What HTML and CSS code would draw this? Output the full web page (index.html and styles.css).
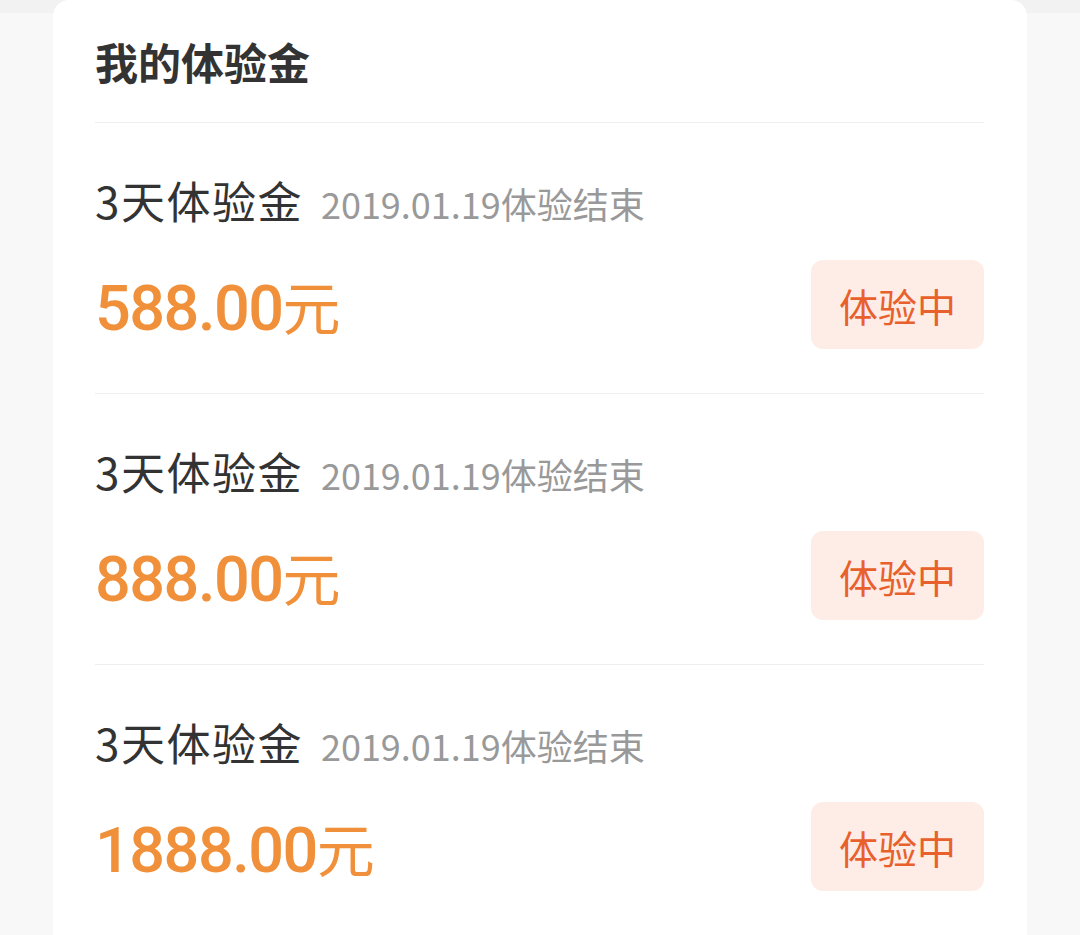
FILE: index.html
```html
<!DOCTYPE html>
<html lang="zh-CN">
<head>
    <meta charset="UTF-8">
    <meta name="viewport" content="width=device-width, initial-scale=1.0">
    <title>我的体验金</title>
    <link rel="stylesheet" href="styles.css">
</head>
<body>
    <div class="card">
        <div class="card-title">我的体验金</div>

        <div class="trial-item">
            <div class="trial-head">
                <span class="trial-name">3天体验金</span>
                <span class="trial-date">2019.01.19体验结束</span>
            </div>
            <div class="trial-body">
                <span class="trial-amount">588.00<span class="unit">元</span></span>
                <span class="trial-status">体验中</span>
            </div>
        </div>

        <div class="trial-item">
            <div class="trial-head">
                <span class="trial-name">3天体验金</span>
                <span class="trial-date">2019.01.19体验结束</span>
            </div>
            <div class="trial-body">
                <span class="trial-amount">888.00<span class="unit">元</span></span>
                <span class="trial-status">体验中</span>
            </div>
        </div>

        <div class="trial-item">
            <div class="trial-head">
                <span class="trial-name">3天体验金</span>
                <span class="trial-date">2019.01.19体验结束</span>
            </div>
            <div class="trial-body">
                <span class="trial-amount">1888.00<span class="unit">元</span></span>
                <span class="trial-status">体验中</span>
            </div>
        </div>
    </div>
</body>
</html>
```

FILE: styles.css
```css
body {
    margin: 0;
    padding: 0 53px;
    font-family: "Noto Sans CJK SC", "Noto Sans", sans-serif;
    background: linear-gradient(#f2f2f2 0, #f2f2f2 13px, #f8f8f8 13px) no-repeat, #f8f8f8;
    height: 935px;
    overflow: hidden;
}

.card {
    background-color: #fff;
    border-radius: 16px 16px 0 0;
    padding: 0 43px 0 42px;
    min-height: 1000px;
}

.card-title {
    height: 122px;
    display: flex;
    align-items: center;
    font-size: 43px;
    font-weight: bold;
    color: #333;
    border-bottom: 1px solid #eeeeee;
}

.trial-item {
    padding: 52px 0 44px;
    border-bottom: 1px solid #eeeeee;
}

.trial-head {
    display: flex;
    align-items: baseline;
    line-height: 50px;
}

.trial-name {
    font-size: 44px;
    letter-spacing: 1.5px;
    color: #333;
}

.trial-date {
    font-size: 36px;
    color: #999;
    margin-left: 18px;
}

.trial-body {
    display: flex;
    align-items: center;
    justify-content: space-between;
    margin-top: 32px;
}

.trial-amount {
    font-family: Roboto, "Noto Sans CJK SC", sans-serif;
    font-size: 63px;
    font-weight: 500;
    line-height: 63px;
    letter-spacing: -1.5px;
    color: #f0903a;
    margin-top: 4px;
}

.unit {
    font-family: "Noto Sans CJK SC", sans-serif;
    font-weight: normal;
    font-size: 58px;
    letter-spacing: 0;
}

.trial-status {
    width: 173px;
    height: 89px;
    display: flex;
    align-items: center;
    justify-content: center;
    background-color: #fdede6;
    border-radius: 12px;
    font-size: 39px;
    color: #e8602c;
}
```
